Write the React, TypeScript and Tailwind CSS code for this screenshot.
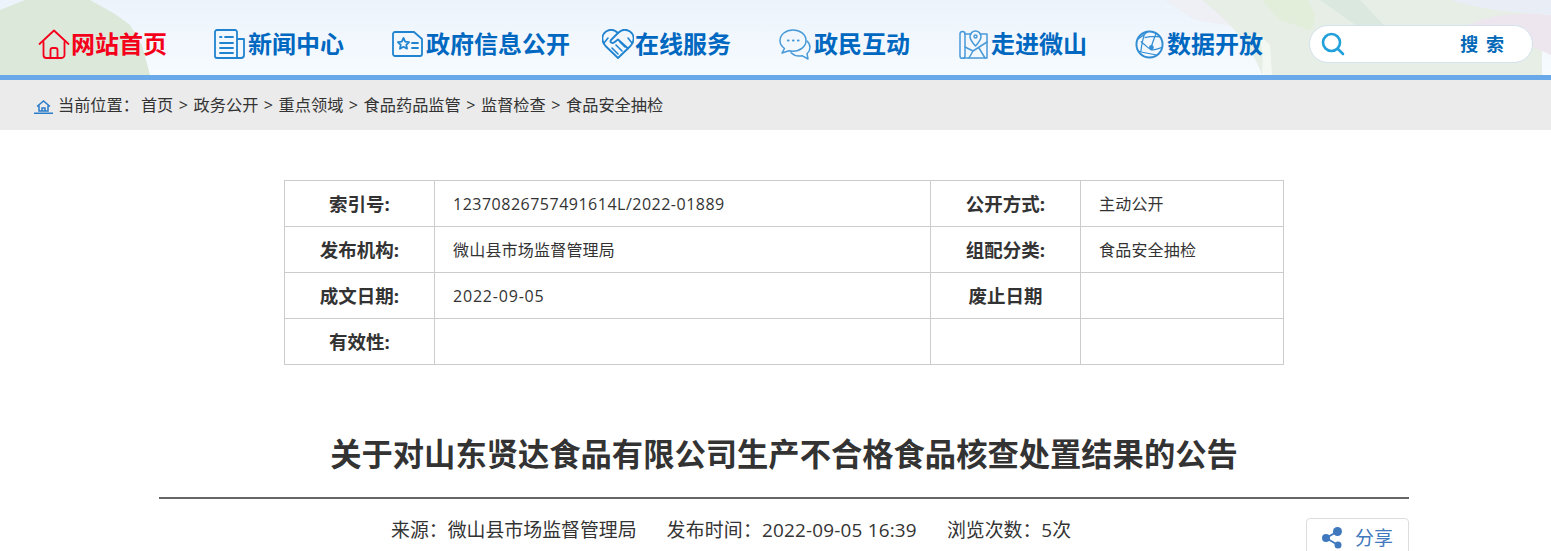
import React from "react";

const S = { fill: "none", stroke: "currentColor", strokeWidth: 1.8, strokeLinecap: "round", strokeLinejoin: "round" } as const;

const HomeIcon = () => (
  <svg width="32" height="30" viewBox="0 0 32 30" {...S}>
    <path d="M1.500 15 16 1.500 30.500 15" />
    <path d="M5.500 13v13a3 3 0 0 0 3 3h15a3 3 0 0 0 3-3V13" />
    <path d="M12.500 29v-8a2 2 0 0 1 2-2h3a2 2 0 0 1 2 2v8" />
  </svg>
);
const NewsIcon = () => (
  <svg width="31" height="30" viewBox="0 0 31 30" {...S}>
    <path d="M23 28V3a2 2 0 0 0-2-2H3a2 2 0 0 0-2 2v24a2 2 0 0 0 2 2h24a3 3 0 0 0 3-3V10h-7" />
    <path d="M6 8h1.500M11 8h8M6 14h13M6 19h13M6 24h13" />
  </svg>
);
const GovIcon = () => (
  <svg width="31" height="26" viewBox="0 0 31 26" {...S}>
    <path d="M3 1h19l8 7v15a2 2 0 0 1-2 2H3a2 2 0 0 1-2-2V3a2 2 0 0 1 2-2z" />
    <path d="m11.500 7 1.700 3.600 3.900.5-2.800 2.700.7 3.900-3.500-1.900L8 17.700l.7-3.900-2.800-2.700 3.900-.5z" />
    <path d="M20 12h6M20 17h6" />
  </svg>
);
const ServiceIcon = () => (
  <svg width="32" height="30" viewBox="0 0 32 30" {...S}>
    <path d="M16 29 3.500 17C-1 12-.5 5.500 4 2.500 8.500-.5 13 1 16 4c3-3 7.500-4.500 12-1.500 4.500 3 5 9.500.5 14.500z" />
    <path d="M16 4 9 11c-1.500 2 1 4 3 2.500l4-3 10 9" />
    <path d="m10 19 6 6M14 16l6 6M18 13l5 5" strokeWidth="1.600" />
    <path d="M2 14 6 9M30 14l-4-5" strokeWidth="1.600" />
  </svg>
);
const ChatIcon = () => (
  <svg width="32" height="31" viewBox="0 0 32 31" {...S} strokeWidth="1.500" className="opacity-80">
    <path d="M14 1C7 1 1 5.500 1 11.500c0 3.300 1.800 6 4.500 8L3 24l7-2.300c1.300.3 2.600.5 4 .5 7 0 13-4.500 13-10.700S21 1 14 1z" />
    <path d="M28 12c2 1.800 3 4 3 6.500 0 2.500-1.200 4.600-3 6.200l1 5.300-6-3.300c-4 .8-8-.2-11-3" />
    <path d="M9 11.500h.5M14 11.500h.5M19 11.500h.5" strokeWidth="2.200" />
  </svg>
);
const MapIcon = () => (
  <svg width="29" height="29" viewBox="0 0 29 29" {...S} strokeWidth="1.500" className="opacity-80">
    <path d="M1 4a2.500 2.500 0 0 1 5 0v22a2.500 2.500 0 0 1-5 0z" />
    <path d="M6 4h6M21 4h7v24H4" />
    <path d="M16.500 1a5.500 5.500 0 0 0-5.500 5.500C11 10 16.500 16 16.500 16S22 10 22 6.500A5.500 5.500 0 0 0 16.500 1z" />
    <circle cx="16.500" cy="6.500" r="1.500" />
    <path d="M6 17l8 4 14-9M14 21l-4 7M20 18l6 10" />
  </svg>
);
const DataIcon = () => (
  <svg width="29" height="29" viewBox="0 0 30 30" fill="none" stroke="currentColor" strokeWidth="1.300" className="opacity-90">
    <circle cx="15" cy="15" r="13.500" strokeWidth="2" />
    <path d="M13 2C9 5 6 8 2 10M10 4c-2 5-3 10-4 19M6 12c4 3 8 7 10 8s7 0 12-2M22 3c-2 5-4 10-6 17M10 8c4-1 10-2 16-1M4 22c5 2 12 2 18 4" />
    <circle cx="17" cy="18" r="1.800" fill="currentColor" />
  </svg>
);

const nav = [
  { label: "新闻中心", icon: <NewsIcon />, cls: "ml-[25px] gap-[3px]" },
  { label: "政府信息公开", icon: <GovIcon />, cls: "ml-[48px] gap-[3px]" },
  { label: "在线服务", icon: <ServiceIcon />, cls: "ml-[32px] gap-[1px]" },
  { label: "政民互动", icon: <ChatIcon />, cls: "ml-[48px] gap-[3px]" },
  { label: "走进微山", icon: <MapIcon />, cls: "ml-[49px] gap-[3px]" },
  { label: "数据开放", icon: <DataIcon />, cls: "ml-[48px] gap-[3px]" },
];

const crumbs = ["首页", "政务公开", "重点领域", "食品药品监管", "监督检查", "食品安全抽检"];

const rows = [
  ["索引号:", "12370826757491614L/2022-01889", "公开方式:", "主动公开"],
  ["发布机构:", "微山县市场监督管理局", "组配分类:", "食品安全抽检"],
  ["成文日期:", "2022-09-05", "废止日期", ""],
  ["有效性:", "", "", ""],
];

const valueTracking = ["tracking-[0.5px]", "tracking-[0.2px]", "tracking-[0.8px]", ""];

export default function App() {
  return (
    <div className="h-[551px] overflow-hidden bg-white font-['Open_Sans','Noto_Sans_CJK_SC',sans-serif] text-[#333]">
      <header className="relative h-[80px] overflow-hidden border-b-[5px] border-[#69a9e9] bg-gradient-to-b from-[#ecf3fb] to-[#f6fbff]">
        <svg className="absolute inset-0" width="1551" height="75" viewBox="0 0 1551 75">
          <path d="M0 10 25 0h65l25 14 15 11 12 20 8 30H0z" fill="#dce8da" />
          <path d="M1165 0h60l30 30-60-10z" fill="#efeff6" />
          <path d="M1262 75c-10-30-35-55-60-75h340v75z" fill="#e6eee6" />
          <path d="M1262 0h45c10 15 10 20 3 30l-30-10z" fill="#e2eeda" />
          <path d="M1262 75c2-20 0-30-5-42l13 12 2 30z" fill="#f3f8f3" />
          <path d="M1320 0h40l30 32-30-4z" fill="#dbe8df" />
          <path d="M1440 40c30-20 60-30 111-25v40c-30-15-70-20-111-15z" fill="#ede6ee" />
          <path d="M1450 0h101v15c-30-2-70-5-101-15z" fill="#e9eef6" />
        </svg>
        <nav className="relative flex h-[75px] items-center pl-[33px] pt-[13px] text-[24px] font-bold leading-none text-[#0068c0]">
          <a className="flex w-[156px] items-center gap-[1px] pl-[5px] text-[#f5001a]">
            <HomeIcon />
            <span className="whitespace-nowrap">网站首页</span>
          </a>
          {nav.map((n) => (
            <a key={n.label} className={`flex items-center ${n.cls}`}>
              <span className="text-[#1f83d0]">{n.icon}</span>
              <span className="whitespace-nowrap">{n.label}</span>
            </a>
          ))}
          <div className="ml-[46px] flex h-[38px] w-[224px] items-center rounded-[19px] border border-[#d3e2ec] bg-white pl-[11px] pr-[28px]">
            <svg width="24" height="24" viewBox="0 0 24 24" fill="none" stroke="#22a0dc" strokeWidth="2.600" strokeLinecap="round">
              <circle cx="10.500" cy="10.500" r="8.500" />
              <path d="m17 17 5 5" />
            </svg>
            <span className="ml-auto whitespace-pre text-[18px] font-bold text-[#0068b7] [word-spacing:3px]">搜 索</span>
          </div>
        </nav>
        <div className="absolute bottom-[-5px] left-[33px] h-[5px] w-[156px] bg-[#f5001a]" />
      </header>

      <div className="flex h-[50px] items-center bg-[#ebebeb] pl-[34px] text-[16.200px]">
        <svg width="19" height="15" viewBox="0 0 19 15" fill="none" stroke="#2b7cc8" strokeWidth="1.500" className="mr-[5px] mt-[3px]">
          <path d="M3 7.500 9.500 2 16 7.500M5 6.500V12h9V6.500M8 12V9h3v3" />
          <path d="M0 14.250h19" />
        </svg>
        <span className="mr-[2px]">当前位置：</span>
        {crumbs.map((c, i) => (
          <span key={c} className="whitespace-pre">
            {c}
            {i < crumbs.length - 1 ? <span className="mx-[5.500px]">&gt;</span> : null}
          </span>
        ))}
      </div>

      <table className="ml-[284px] mt-[50px] w-[999px] table-fixed border-collapse text-[16px]">
        <colgroup>
          <col className="w-[150px]" />
          <col className="w-[496px]" />
          <col className="w-[150px]" />
          <col className="w-[203px]" />
        </colgroup>
        <tbody>
          {rows.map((r, i) => (
            <tr key={r[0]} className="h-[46px]">
              <th className="border border-[#ccc] pt-[1px] text-[18.500px] font-bold">{r[0]}</th>
              <td className={`border border-[#ccc] pl-[18px] ${valueTracking[i]}`}>{r[1]}</td>
              <th className="border border-[#ccc] pt-[1px] text-[18.500px] font-bold">{r[2]}</th>
              <td className="border border-[#ccc] pl-[18px] tracking-[0.2px]">{r[3]}</td>
            </tr>
          ))}
        </tbody>
      </table>

      <h1 className="ml-[159px] mt-[66px] w-[1250px] text-center text-[31.300px] font-bold leading-[46px] whitespace-nowrap">
        关于对山东贤达食品有限公司生产不合格食品核查处置结果的公告
      </h1>
      <div className="ml-[159px] mt-[20px] w-[1250px] border-t-2 border-[#666]" />
      <div className="ml-[159px] mt-[18px] flex w-[1250px] items-start pl-[232px] text-[18.900px] leading-[26px]">
        <span className="whitespace-nowrap">来源：微山县市场监督管理局</span>
        <span className="ml-[30px] whitespace-nowrap tracking-[0.2px]">发布时间：2022-09-05 16:39</span>
        <span className="ml-[30px] whitespace-nowrap">浏览次数：5次</span>
        <button className="ml-auto mt-[1px] flex h-[40px] w-[103px] shrink-0 items-center gap-[13px] rounded-[4px] border border-[#ddd] bg-white pl-[15px] text-[#3f78bd]">
          <svg width="20" height="22" viewBox="0 0 20 22" fill="#3f78bd">
            <circle cx="15.500" cy="4.500" r="4.500" />
            <circle cx="4" cy="11" r="4" />
            <circle cx="16" cy="18" r="3.500" />
            <path d="M4 11 15.500 4.500M4 11l12 7" stroke="#3f78bd" strokeWidth="2" />
          </svg>
          <span>分享</span>
        </button>
      </div>
    </div>
  );
}
